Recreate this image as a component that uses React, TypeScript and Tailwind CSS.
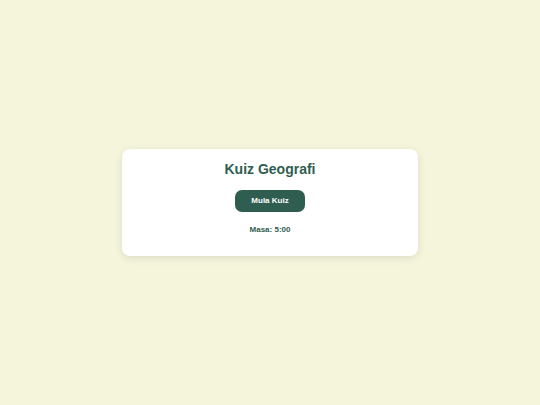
import { useEffect, useState } from 'react';

const QUIZ_SECONDS = 300;

function formatTime(seconds: number) {
    const minutes = Math.floor(seconds / 60);
    return `${minutes}:${String(seconds % 60).padStart(2, '0')}`;
}

export default function App() {
    const [started, setStarted] = useState(false);
    const [timeLeft, setTimeLeft] = useState(QUIZ_SECONDS);

    useEffect(() => {
        if (!started || timeLeft === 0) return;
        const timer = setTimeout(() => setTimeLeft(timeLeft - 1), 1000);
        return () => clearTimeout(timer);
    }, [started, timeLeft]);

    return (
        <main className="flex min-h-screen items-center justify-center bg-[#f5f5dc] px-4 font-['Liberation_Sans',Arial,sans-serif] text-[#2f5d50]">
            <div className="flex w-full max-w-[296px] flex-col items-center rounded-lg bg-white px-4 pt-3 pb-5 shadow-[0_2px_9px_rgba(0,0,0,0.1)]">
                <h1 className="text-[14px] leading-4 font-bold">Kuiz Geografi</h1>
                <button
                    type="button"
                    className="mt-[13px] rounded-[7px] bg-[#2f5d50] px-4 py-[5px] text-[8px] leading-3 font-bold text-white"
                    onClick={() => setStarted(true)}
                >
                    Mula Kuiz
                </button>
                <p className="mt-3 text-[8px] leading-3 font-bold">Masa: {formatTime(timeLeft)}</p>
            </div>
        </main>
    );
}
